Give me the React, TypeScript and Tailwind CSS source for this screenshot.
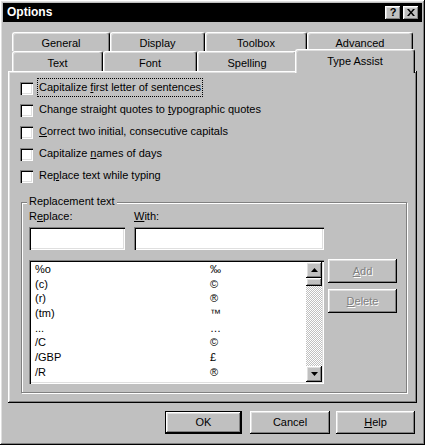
import React from "react";

const raised =
  "shadow-[inset_-1px_-1px_0_#000,inset_1px_1px_0_#fff,inset_-2px_-2px_0_#808080,inset_2px_2px_0_#dfdfdf]";
const sunken =
  "shadow-[inset_1px_1px_0_#808080,inset_2px_2px_0_#000,inset_-1px_-1px_0_#fff,inset_-2px_-2px_0_#dfdfdf]";

const backTabs = [
  { label: "General", w: "w-[98px]" },
  { label: "Display", w: "w-[95px]" },
  { label: "Toolbox", w: "w-[102px]" },
  { label: "Advanced", w: "w-[106px]" },
];

const frontTabs = [
  { label: "Text", w: "w-[91px]" },
  { label: "Font", w: "w-[94px]" },
  { label: "Spelling", w: "w-[100px]" },
];

const options = [
  { pre: "Capitalize ", key: "f", post: "irst letter of sentences", focus: true },
  { pre: "Change straight quotes to ", key: "t", post: "ypographic quotes" },
  { pre: "", key: "C", post: "orrect two initial, consecutive capitals" },
  { pre: "Capitalize ", key: "n", post: "ames of days" },
  { pre: "Re", key: "p", post: "lace text while typing" },
];

const entries = [
  ["%o", "‰"],
  ["(c)", "©"],
  ["(r)", "®"],
  ["(tm)", "™"],
  ["...", "…"],
  ["/C", "©"],
  ["/GBP", "£"],
  ["/R", "®"],
];

function Arrow({ up }: { up?: boolean }) {
  return (
    <svg width="7" height="4" viewBox="0 0 7 4">
      <path d={up ? "M3.5 0L7 4H0z" : "M0 0h7L3.5 4z"} fill="#000" />
    </svg>
  );
}

export default function App() {
  return (
    <div
      className={`w-[425px] h-[445px] bg-[#c0c0c0] p-[3px] flex flex-col text-[11px] leading-[13px] text-black font-['Liberation_Sans',Arial,sans-serif] ${raised}`}
    >
      {/* title bar */}
      <div className="h-[19px] bg-black flex items-center justify-between pl-[4px] pr-[3px]">
        <span className="text-white font-bold text-[12px]">Options</span>
        <div className="flex gap-[2px]">
          <div className={`w-[16px] h-[14px] bg-[#c0c0c0] flex items-center justify-center font-bold text-[11px] ${raised}`}>
            ?
          </div>
          <div className={`w-[16px] h-[14px] bg-[#c0c0c0] flex items-center justify-center ${raised}`}>
            <svg width="8" height="7" viewBox="0 0 8 7">
              <path d="M0 0h2l2 2.5L6 0h2L5 3.5 8 7H6L4 4.5 2 7H0l3-3.5z" fill="#000" />
            </svg>
          </div>
        </div>
      </div>

      <div className="px-[5px] pt-[10px] flex flex-col">
        {/* tabs */}
        <div className="h-[39px] flex flex-col">
          <div className="h-[19px] flex pl-[4px]">
            {backTabs.map((t) => (
              <div
                key={t.label}
                className={`${t.w} h-[19px] pt-[4px] text-center border-l border-t border-r border-white border-r-black rounded-t-[3px] shadow-[inset_-1px_0_0_#808080,inset_1px_1px_0_#dfdfdf]`}
              >
                {t.label}
              </div>
            ))}
          </div>
          <div className="h-[20px] flex pl-[4px]">
            {frontTabs.map((t) => (
              <div
                key={t.label}
                className={`${t.w} h-[20px] pt-[5px] text-center bg-[#c0c0c0] border-l border-t border-r border-white border-r-black rounded-t-[3px] shadow-[inset_-1px_0_0_#808080,inset_1px_1px_0_#dfdfdf]`}
              >
                {t.label}
              </div>
            ))}
            <div className="relative z-10 w-[120px] h-[24px] -mx-[2px] -mt-[2px] pt-[5px] text-center bg-[#c0c0c0] border-l border-t border-r border-white border-r-black rounded-t-[3px] shadow-[inset_-1px_0_0_#808080,inset_1px_1px_0_#dfdfdf]">
              Type Assist
            </div>
          </div>
        </div>

        {/* panel */}
        <div className={`h-[332px] bg-[#c0c0c0] flex flex-col pl-[12px] pr-[10px] pt-[6px] ${raised}`}>
          {options.map((o, i) => (
            <div key={i} className="h-[22px] flex items-center">
              <div className={`w-[13px] h-[13px] bg-white ${sunken}`} />
              <span
                className={`ml-[5px] px-[1px] py-[2px] -mt-[2px] ${
                  o.focus ? "outline-dotted outline-1 outline-black" : ""
                }`}
              >
                {o.pre}
                <span className="underline">{o.key}</span>
                {o.post}
              </span>
            </div>
          ))}

          {/* group box */}
          <div className="mt-[15px] ml-[1px] h-[191px] border border-[#808080] shadow-[1px_1px_0_#fff,inset_1px_1px_0_#fff] flex flex-col pl-[7px]">
            <div className="-mt-[8px] -ml-[2px] px-[2px] w-fit bg-[#c0c0c0]">Replacement text</div>
            <div className="flex mt-[2px]">
              <div className="w-[96px] flex flex-col">
                <span>
                  R<span className="underline">e</span>place:
                </span>
                <div className={`mt-[4px] h-[23px] bg-white ${sunken}`} />
              </div>
              <div className="ml-[9px] w-[190px] flex flex-col">
                <span>
                  <span className="underline">W</span>ith:
                </span>
                <div className={`mt-[4px] h-[23px] bg-white ${sunken}`} />
              </div>
            </div>

            <div className="flex mt-[10px]">
              <div className={`w-[295px] h-[124px] bg-white p-[2px] flex ${sunken}`}>
                <div className="flex-1 flex flex-col pl-[4px]">
                  {entries.map(([a, b]) => (
                    <div key={a} className="h-[14.7px] flex items-center">
                      <span className="w-[175px]">{a}</span>
                      <span>{b}</span>
                    </div>
                  ))}
                </div>
                <div className="w-[16px] flex flex-col">
                  <div className={`h-[16px] bg-[#c0c0c0] flex items-center justify-center ${raised}`}>
                    <Arrow up />
                  </div>
                  <div className={`h-[8px] bg-[#c0c0c0] ${raised}`} />
                  <div className="flex-1 bg-[repeating-conic-gradient(#c0c0c0_0%_25%,#ffffff_0%_50%)] bg-[length:2px_2px]" />
                  <div className={`h-[16px] bg-[#c0c0c0] flex items-center justify-center ${raised}`}>
                    <Arrow />
                  </div>
                </div>
              </div>
              <div className="ml-[4px] w-[69px] flex flex-col gap-[6px] -mt-[1px]">
                <div className={`h-[24px] flex items-center justify-center text-[#808080] [text-shadow:1px_1px_0_#fff] ${raised}`}>
                  <span>
                    <span className="underline">A</span>dd
                  </span>
                </div>
                <div className={`h-[24px] flex items-center justify-center text-[#808080] [text-shadow:1px_1px_0_#fff] ${raised}`}>
                  <span>
                    <span className="underline">D</span>elete
                  </span>
                </div>
              </div>
            </div>
          </div>
        </div>

        {/* buttons */}
        <div className="flex justify-end pr-[2px] mt-[8px]">
          <div className="w-[77px] h-[23px] border border-black">
            <div className={`h-full flex items-center justify-center ${raised}`}>OK</div>
          </div>
          <div className={`ml-[8px] w-[80px] h-[23px] flex items-center justify-center ${raised}`}>Cancel</div>
          <div className={`ml-[6px] w-[79px] h-[23px] flex items-center justify-center ${raised}`}>
            <span>
              <span className="underline">H</span>elp
            </span>
          </div>
        </div>
      </div>
    </div>
  );
}
